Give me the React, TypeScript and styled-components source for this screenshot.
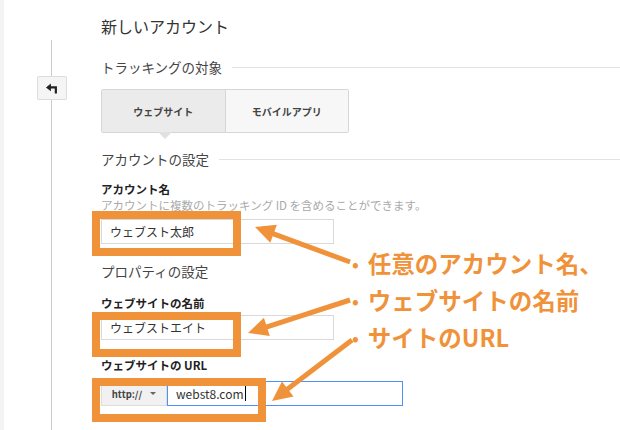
import styled, { createGlobalStyle } from 'styled-components'

const Global = createGlobalStyle`
  html, body { margin: 0; padding: 0; background: #fff; }
  body { font-family: "Noto Sans CJK JP", "Liberation Sans", sans-serif; color: #333; }
`

const Page = styled.div`
  position: relative;
  width: 620px;
  height: 430px;
  overflow: hidden;
  display: flex;
`

const Rail = styled.div`
  width: 101px;
  flex-shrink: 0;
  position: relative;
  border-left: 4px solid #f3f3f3;
  box-sizing: border-box;
`

const RailLine = styled.div`
  position: absolute;
  left: 47px;
  top: 40px;
  bottom: 0;
  width: 1px;
  background: #ccc;
`

const BackButton = styled.div`
  position: absolute;
  left: 33px;
  top: 76px;
  width: 28px;
  height: 22px;
  background: #f5f5f5;
  border: 1px solid #ddd;
  border-radius: 2px;
  display: flex;
  align-items: center;
  justify-content: center;
`

const Main = styled.div`
  flex: 1;
  display: flex;
  flex-direction: column;
`

const Title = styled.div`
  font-size: 16px;
  margin-top: 14px;
  height: 24px;
  color: #333;
`

const Section = styled.div<{ $top: number; $noRule?: boolean }>`
  display: flex;
  align-items: center;
  gap: 10px;
  font-size: 13.5px;
  margin-top: ${(p) => p.$top}px;
  height: 20px;
  color: #444;
  &::after {
    content: '';
    flex: 1;
    height: 1px;
    background: ${(p) => (p.$noRule ? 'transparent' : '#e2e2e2')};
  }
`

const Tabs = styled.div`
  display: flex;
  margin-top: 12px;
  width: 246px;
  height: 42px;
  border: 1px solid #d6d6d6;
  border-radius: 2px;
  position: relative;
`

const Tab = styled.div<{ $active?: boolean }>`
  flex: 1;
  display: flex;
  align-items: center;
  justify-content: center;
  font-size: 10px;
  font-weight: bold;
  color: #444;
  background: ${(p) => (p.$active ? '#ebebeb' : '#f7f7f7')};
  & + & { border-left: 1px solid #d6d6d6; }
`

const Pointer = styled.div`
  position: absolute;
  left: 56px;
  top: 42px;
  width: 0;
  height: 0;
  border-left: 7px solid transparent;
  border-right: 7px solid transparent;
  border-top: 7px solid #e0e0e0;
`

const Label = styled.div<{ $top: number }>`
  font-size: 11.5px;
  font-weight: bold;
  color: #222;
  margin-top: ${(p) => p.$top}px;
`

const Help = styled.div`
  font-size: 11.5px;
  color: #aaa;
  margin-top: 0;
`

const Input = styled.div<{ $top: number; $width: number; $focus?: boolean }>`
  margin-top: ${(p) => p.$top}px;
  width: ${(p) => p.$width}px;
  height: 25px;
  box-sizing: border-box;
  border: 1px solid ${(p) => (p.$focus ? '#4d90fe' : '#d9d9d9')};
  font-size: 12px;
  color: #333;
  display: flex;
  align-items: center;
  padding-left: 8px;
`

const UrlRow = styled.div`
  display: flex;
  margin-top: 8px;
  height: 25px;
`

const Scheme = styled.div`
  width: 66px;
  background: #f1f1f1;
  border: 1px solid #ddd;
  box-sizing: border-box;
  font-size: 9.5px;
  font-weight: bold;
  color: #444;
  display: flex;
  align-items: center;
  justify-content: center;
  gap: 8px;
  &::after {
    content: '';
    border-left: 3px solid transparent;
    border-right: 3px solid transparent;
    border-top: 3px solid #666;
  }
`

const Caret = styled.span`
  display: inline-block;
  width: 1px;
  height: 15px;
  background: #000;
  margin-left: 1px;
`

const Box = styled.div<{ $x: number; $y: number; $w: number; $h: number }>`
  position: absolute;
  left: ${(p) => p.$x}px;
  top: ${(p) => p.$y}px;
  width: ${(p) => p.$w}px;
  height: ${(p) => p.$h}px;
  border: 8px solid #f0923a;
  box-sizing: border-box;
`

const Notes = styled.div`
  position: absolute;
  left: 352px;
  top: 248px;
  display: flex;
  flex-direction: column;
  gap: 7px;
`

const Note = styled.div`
  font-size: 23.5px;
  font-weight: bold;
  color: #f0923a;
  line-height: 30px;
  white-space: nowrap;
  &::before { content: '•'; font-size: 18px; margin-right: 9px; vertical-align: 2px; }
`

const Arrows = styled.svg`
  position: absolute;
  left: 0;
  top: 0;
`

const Arrow = ({ x1, y1, x2, y2 }: { x1: number; y1: number; x2: number; y2: number }) => {
  const a = Math.atan2(y2 - y1, x2 - x1)
  const len = 22
  const w = 0.45
  const bx = x2 - Math.cos(a) * len * 0.8
  const by = y2 - Math.sin(a) * len * 0.8
  const p1 = `${x2 - Math.cos(a - w) * len},${y2 - Math.sin(a - w) * len}`
  const p2 = `${x2 - Math.cos(a + w) * len},${y2 - Math.sin(a + w) * len}`
  return (
    <g fill="#f0923a" stroke="#f0923a">
      <line x1={x1} y1={y1} x2={bx} y2={by} strokeWidth={5} />
      <polygon points={`${x2},${y2} ${p1} ${p2}`} stroke="none" />
    </g>
  )
}

export default function App() {
  return (
    <Page>
      <Global />
      <Rail>
        <RailLine />
        <BackButton>
          <svg width="14" height="11" viewBox="0 0 12 10">
            <path d="M0.5 4 L5 0.5 L5 3 L10.5 3 L10.5 9.5 L8.5 9.5 L8.5 5 L5 5 L5 7.5 Z" fill="#222" />
          </svg>
        </BackButton>
      </Rail>
      <Main>
        <Title>新しいアカウント</Title>
        <Section $top={19}>トラッキングの対象</Section>
        <Tabs>
          <Tab $active>ウェブサイト</Tab>
          <Tab>モバイルアプリ</Tab>
          <Pointer />
        </Tabs>
        <Section $top={16}>アカウントの設定</Section>
        <Label $top={12}>アカウント名</Label>
        <Help>アカウントに複数のトラッキング ID を含めることができます。</Help>
        <Input $top={6} $width={233}>ウェブスト太郎</Input>
        <Section $top={17} $noRule>プロパティの設定</Section>
        <Label $top={14}>ウェブサイトの名前</Label>
        <Input $top={4} $width={233}>ウェブストエイト</Input>
        <Label $top={17}>ウェブサイトの URL</Label>
        <UrlRow>
          <Scheme>http://</Scheme>
          <Input $top={0} $width={236} $focus>
            webst8.com<Caret />
          </Input>
        </UrlRow>
      </Main>
      <Box $x={92} $y={211} $w={149} $h={45} />
      <Box $x={92} $y={312} $w={149} $h={45} />
      <Box $x={92} $y={378} $w={174} $h={44} />
      <Arrows width="620" height="430">
        <Arrow x1={350} y1={262} x2={255} y2={227} />
        <Arrow x1={350} y1={300} x2={248} y2={333} />
        <Arrow x1={352} y1={340} x2={272} y2={401} />
      </Arrows>
      <Notes>
        <Note>任意のアカウント名、</Note>
        <Note>ウェブサイトの名前</Note>
        <Note>サイトのURL</Note>
      </Notes>
    </Page>
  )
}
